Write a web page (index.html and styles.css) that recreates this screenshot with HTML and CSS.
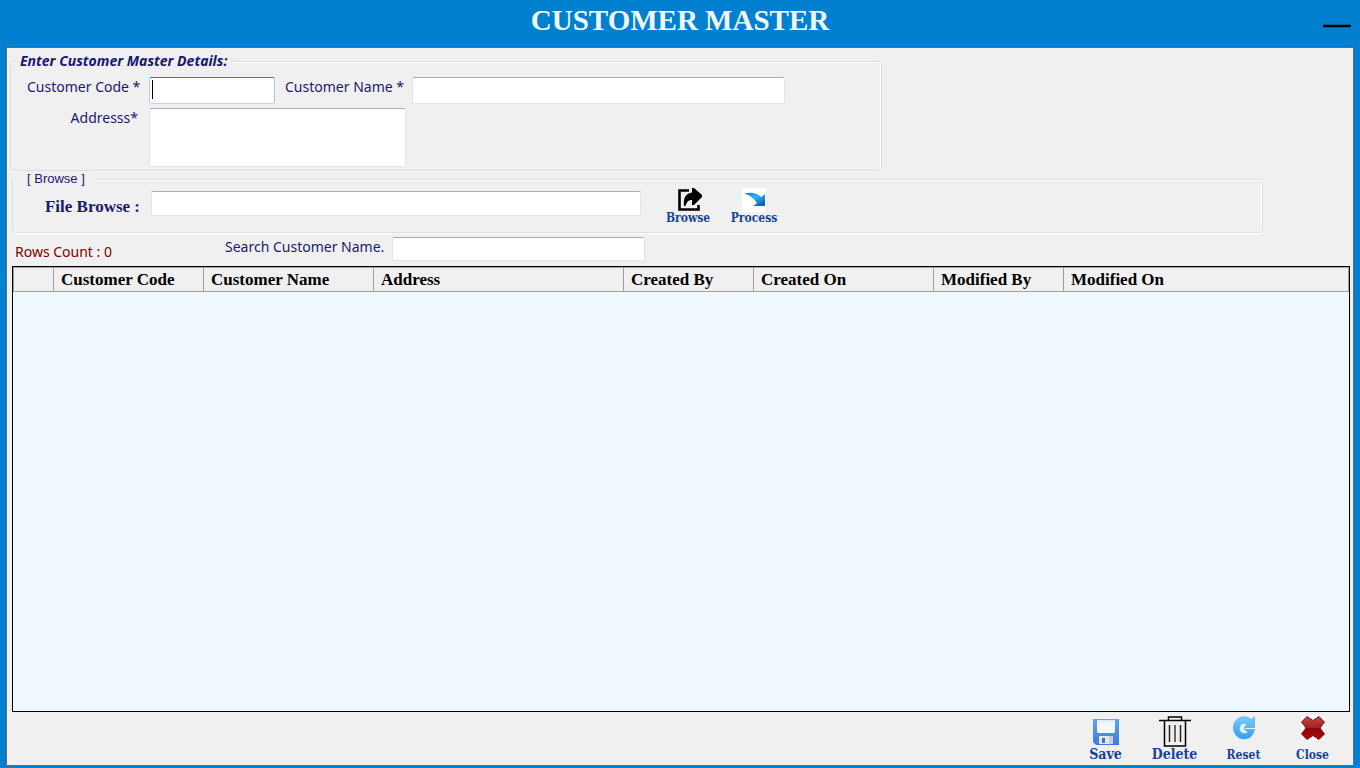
FILE: index.html
```html
<!DOCTYPE html>
<html lang="en">
<head>
<meta charset="utf-8">
<title>Customer Master</title>
<link rel="stylesheet" href="styles.css">
</head>
<body>
<header class="titlebar">
  <h1 class="title">CUSTOMER MASTER</h1>
  <button class="minimize" type="button" aria-label="Minimize"></button>
</header>
<main class="window">
  <fieldset class="group details">
    <legend class="details-legend">Enter Customer Master Details:</legend>
    <div class="details-grid">
      <label class="field-label" for="code">Customer Code *</label>
      <input class="box box-active" id="code" type="text" autofocus>
      <label class="field-label" for="name">Customer Name *</label>
      <input class="box" id="name" type="text">
      <label class="field-label field-label-end" for="address">Addresss*</label>
      <textarea class="box address" id="address"></textarea>
    </div>
  </fieldset>
  <fieldset class="group browse">
    <legend class="browse-legend">[ Browse ]</legend>
    <div class="browse-row">
      <label class="file-label" for="file">File Browse :</label>
      <input class="box file-box" id="file" type="text">
      <button class="action" type="button">
        <svg class="browse-icon" width="24" height="24" viewBox="0 0 24 24"><path d="M11 2.500H1.500v19h19V17" fill="none" stroke="#000" stroke-width="2.600"/><path d="M14 0h2l8 7v2l-8 8h-2v-5c-4 0-5 2-6.500 6H6C5 10 8 5 14 4.500z"/></svg>
        <span>Browse</span>
      </button>
      <button class="action" type="button">
        <svg width="24" height="24" viewBox="0 0 24 24"><defs><linearGradient id="arrow" x1="0" y1="0" x2="1" y2="1"><stop offset="0" stop-color="#0f7fd0"/><stop offset=".45" stop-color="#2fb0f5"/><stop offset="1" stop-color="#064fa4"/></linearGradient></defs><path d="M0 0h24v24H0z" fill="#fff"/><path d="M2 5.500C9 4 15 5 19 9l4-3v12H11l4-3C11 10 8 7 2 5.500z" fill="url(#arrow)"/></svg>
        <span>Process</span>
      </button>
    </div>
  </fieldset>
  <div class="search-row">
    <span class="row-count">Rows Count : 0</span>
    <label class="search-label" for="search">Search Customer Name.</label>
    <input class="box search-box" id="search" type="text">
  </div>
  <div class="grid-frame">
    <table class="grid">
      <colgroup><col class="c-mark"><col class="c-code"><col class="c-name"><col class="c-address"><col class="c-by"><col class="c-on"><col class="c-by"><col></colgroup>
      <thead>
        <tr><td></td><th>Customer Code</th><th>Customer Name</th><th>Address</th><th>Created By</th><th>Created On</th><th>Modified By</th><th>Modified On</th></tr>
      </thead>
      <tbody></tbody>
    </table>
  </div>
  <footer class="toolbar">
    <button class="tool tool-large" type="button">
      <svg width="28" height="28" viewBox="0 0 28 28"><defs><linearGradient id="disk" x1="0" y1="0" x2="0" y2="1"><stop offset="0" stop-color="#62a3f2"/><stop offset="1" stop-color="#3f79d8"/></linearGradient></defs><path d="M1 0h26v26H4l-3-3z" fill="url(#disk)"/><path d="M5 1h18v12l-1 1H6l-1-1z" fill="#f2f7fd"/><path d="M5 2h18" stroke="#cddff5"/><path d="M7 17h14v8H7z" fill="#e4e8ec"/><path d="M17 17h4v8h-4z" fill="#c9ced4"/><path d="M10 19h3v5h-3z" fill="#3674d2"/></svg>
      <span>Save</span>
    </button>
    <button class="tool tool-large" type="button">
      <svg width="32" height="32" viewBox="0 0 32 32" fill="none" stroke="#000"><path d="M0 5.500h32" stroke-width="1.500"/><path d="M9.500 5V2h13v3" stroke-width="1.500"/><path d="M5.500 6v25h21V6" stroke-width="1.500"/><path d="M10.500 10v17M21.500 10v17" stroke="#222" stroke-width="1.500"/><path d="M16 10v17" stroke="#666" stroke-width="2"/></svg>
      <span>Delete</span>
    </button>
    <button class="tool" type="button">
      <svg class="tool-small-icon" width="24" height="26" viewBox="0 0 24 26"><defs><linearGradient id="reset" x1="0" y1="0" x2="0" y2="1"><stop offset="0" stop-color="#78ccfb"/><stop offset="1" stop-color="#319df0"/></linearGradient></defs><path d="M22.500 2v10.500h-10v2h10C21 21 17 24 12.500 24 6 24 1.500 19 1.500 13 1.500 3 12-1 19.500 4.500zM15 9c-4-2-7.500 0-7.500 4.500 0 5 5.500 6.500 8.500 3.500l-3.500-2.500v-2z" fill="url(#reset)" fill-rule="evenodd" stroke="#48aef2" stroke-width=".8"/></svg>
      <span>Reset</span>
    </button>
    <button class="tool" type="button">
      <svg class="tool-small-icon" width="24" height="26" viewBox="0 0 24 26"><defs><linearGradient id="close" x1="0" y1="0" x2="0" y2="1"><stop offset="0" stop-color="#c04848"/><stop offset=".48" stop-color="#a82020"/><stop offset=".52" stop-color="#8c0505"/><stop offset="1" stop-color="#a80f0f"/></linearGradient></defs><path d="M0 1h24v24H0z" fill="#fff"/><path d="M6 1.500l6 4 6-4 5.500 5.500-4.500 6 4.500 6-5.500 5.500-6-4-6 4L.5 19 5 13 .5 7z" fill="url(#close)" stroke="#850909"/></svg>
      <span>Close</span>
    </button>
  </footer>
</main>
</body>
</html>
```
FILE: styles.css
```css
* { box-sizing: border-box; }

body {
  margin: 0;
  min-height: 100vh;
  display: flex;
  flex-direction: column;
  padding: 0 6px 2px;
  background: #0080ce;
  color: #191970;
  font: 14px/18px "Noto Sans", sans-serif;
}

button {
  border: 0;
  padding: 0;
  background: none;
  font: inherit;
  cursor: pointer;
}

.titlebar {
  display: grid;
  grid-template-columns: 1fr auto 1fr;
  height: 47px;
}

.title {
  grid-column: 2;
  margin: 0;
  color: #f0f8ff;
  font: bold 29px/40px "Liberation Serif", serif;
}

.minimize {
  justify-self: end;
  align-self: center;
  width: 28px;
  height: 4px;
  margin: 4px 3px 0 0;
  background: #000;
  border: solid #00609a;
  border-width: 1px 0;
}

.window {
  flex: 1;
  display: flex;
  flex-direction: column;
  border: 1px solid #696969;
  background: #f0f0f0;
  padding: 4px 3px 0;
}

.group {
  min-width: 0;
  margin: 0;
  border: 1px solid #d5dfe5;
  border-radius: 3px;
  box-shadow: inset 0 1px #fff, inset -1px 0 #fff, 0 1px #fff;
}

.details {
  width: 100%;
  max-width: 872px;
  padding: 7px 16px 3px;
}

.details-legend {
  margin-left: -10px;
  padding: 0 3px;
  background: #f0f0f0;
  font: italic bold 14px/18px "Noto Sans", sans-serif;
}

.details-grid {
  display: grid;
  grid-template-columns: 110px 126px 115px minmax(0, 373px);
  column-gap: 11px;
  row-gap: 4px;
  padding-left: 1px;
}

.field-label {
  line-height: 20px;
  margin-left: -1px;
  white-space: nowrap;
}

.field-label-end {
  text-align: right;
}

.box {
  min-width: 0;
  height: 27px;
  padding: 0 3px;
  border: 1px solid #e2e3ea;
  border-top-color: #abadb3;
  border-radius: 2px;
  outline: 0;
  background: #fff;
  color: #000;
  font: 18px/22px "Noto Sans", sans-serif;
}

.box-active {
  border-color: #3d7bad #a4c9e3 #b7d9ed #b5cfe7;
  background: linear-gradient(#000, #000) 2px 2px / 1px 19px no-repeat #fff;
  caret-color: transparent;
}

.address {
  grid-column: 2 / 4;
  width: 257px;
  height: 59px;
  resize: none;
}

.browse {
  width: 100%;
  max-width: 1251px;
  margin-left: 2px;
  padding: 1px 18px 8px;
}

.browse-legend {
  margin-left: -12px;
  padding: 0 8px;
  background: #f0f0f0;
  font: 13px/16px "Liberation Sans", sans-serif;
}

.browse-row {
  display: flex;
  align-items: flex-start;
}

.file-label {
  width: 120px;
  padding: 10px 11px 0 0;
  text-align: right;
  font: bold 17px/18px "Liberation Serif", serif;
  white-space: nowrap;
}

.file-box {
  width: 490px;
  height: 25px;
  margin: 3px 14px 0 0;
}

.action,
.tool {
  display: flex;
  flex-direction: column;
  align-items: center;
  color: #15439a;
  font: bold 12px/12px "DejaVu Serif Condensed", "DejaVu Serif", serif;
}

.action {
  width: 66px;
}

.browse-icon {
  margin-left: 4px;
}

.search-row {
  display: flex;
  align-items: flex-start;
  height: 33px;
  padding: 4px 0 0 5px;
}

.row-count {
  width: 210px;
  padding-top: 6px;
  color: #800000;
}

.search-label {
  width: 167px;
  padding-top: 1px;
  white-space: nowrap;
}

.search-box {
  width: 253px;
  height: 24px;
}

.grid-frame {
  flex: 1;
  margin-left: 2px;
  border: 1px solid #000;
  background: #f0f8ff;
}

.grid {
  width: 100%;
  table-layout: fixed;
  border-collapse: collapse;
  color: #000;
  font: bold 17px/23px "Liberation Serif", serif;
}

.grid th,
.grid td {
  height: 24px;
  padding: 0 7px;
  border: 1px solid #a0a0a0;
  background: #f0f0f0;
  text-align: left;
}

.c-mark { width: 40px; }
.c-code { width: 150px; }
.c-name { width: 170px; }
.c-address { width: 250px; }
.c-by { width: 130px; }
.c-on { width: 180px; }

.toolbar {
  display: flex;
  justify-content: flex-end;
  align-items: flex-end;
  height: 53px;
  padding: 0 3px 4px 0;
}

.tool {
  width: 69px;
  justify-content: flex-end;
}

.tool-small-icon {
  margin-bottom: 8px;
}

.tool-large {
  font-size: 14px;
  line-height: 14px;
}
```
